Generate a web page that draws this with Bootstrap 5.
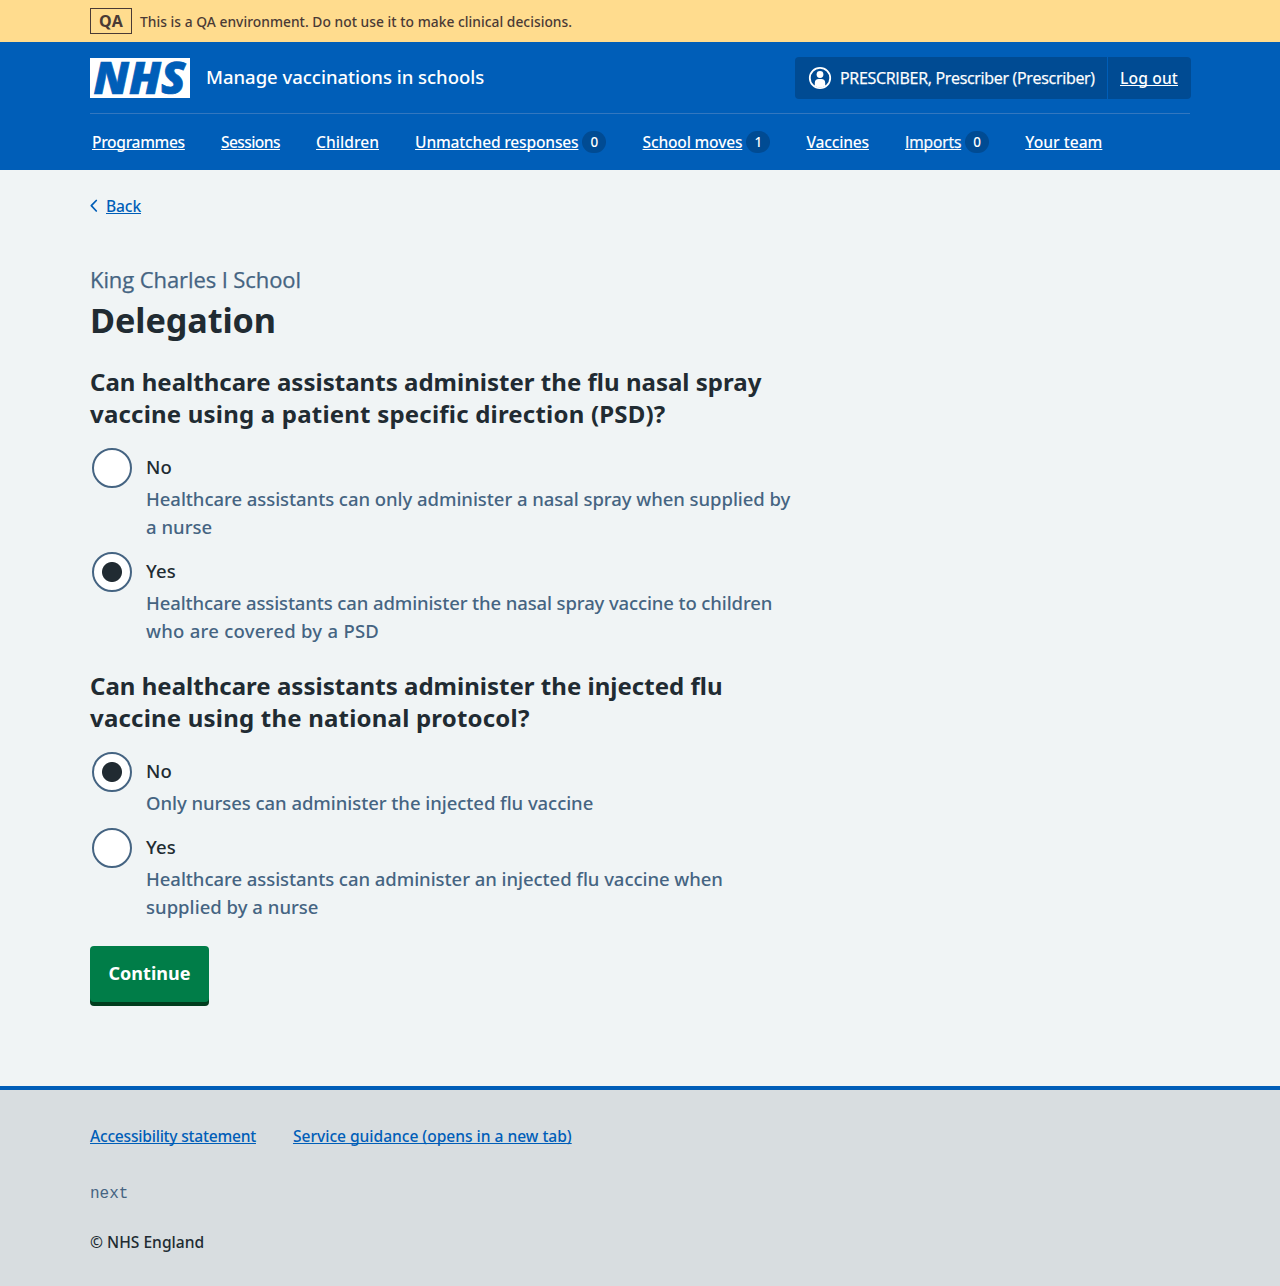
<!DOCTYPE html>
<html lang="en">
<head>
<meta charset="utf-8">
<meta name="viewport" content="width=device-width, initial-scale=1">
<title>Delegation - Manage vaccinations in schools</title>
<link rel="stylesheet" href="https://cdn.jsdelivr.net/npm/bootstrap@5.3.0/dist/css/bootstrap.min.css">
<style>
  :root { --nhs-blue: #005eb8; --nhs-dark: #004b93; --nhs-ink: #212b32; --nhs-hint: #456482; }
  body { background: #f0f4f5; color: var(--nhs-ink); font-family: "Noto Sans", "Open Sans", sans-serif; font-size: 15.6px; font-weight: 500; line-height: 24px; }
  a { color: var(--nhs-blue); text-underline-offset: 1px; text-decoration-thickness: 1px; text-decoration-skip-ink: none; }
  .page-width { width: 1100px; margin: 0 auto; }
  .env-bar { background: #ffdc8e; color: #4a3a35; height: 42px; font-size: 13.8px; letter-spacing: .03px; }
  .env-bar span { padding-top: 2px; }
  .env-tag { border: 1px solid #4a3a35; width: 42px; height: 26px; line-height: 24px; font-size: 16px; font-weight: 700; text-align: center; letter-spacing: .2px; }
  .site-head { background: var(--nhs-blue); height: 128px; color: #fff; }
  .site-head a { color: #fff; }
  .brand-row { height: 72px; border-bottom: 1px solid #3377bf; }
  .nhs-logo { width: 100px; height: 40px; display: block; overflow: visible; }
  .service-name { font-size: 18.5px; line-height: 28px; padding-bottom: 2px; letter-spacing: -.02px; }
  .plain-i { font-family: "Open Sans", "Noto Sans", sans-serif; -webkit-text-stroke: .25px currentColor; }
  .account { background: var(--nhs-dark); border-radius: 4px; height: 42px; margin-right: -1px; }
  .account-user { padding: 0 12px 0 13px; width: 313px; border-right: 1px solid var(--nhs-blue); height: 100%; font-size: 16px; letter-spacing: -.3px; white-space: nowrap; }
  .account-out { padding: 0 13px 0 12px; letter-spacing: .16px; }
  .main-menu { height: 56px; padding: 0 2px; gap: 36.1px; letter-spacing: -.19px; }
  .main-menu li { white-space: nowrap; }
  .fit-snug { letter-spacing: -.34px; }
  .fit-tight { letter-spacing: -.6px; }
  .fit-open { letter-spacing: .02px; }
  .fit-imports { letter-spacing: -.13px; }
  .count { background: var(--nhs-dark); width: 24px; height: 22px; border-radius: 11px; font-size: 13.5px; line-height: 23px; text-align: center; letter-spacing: 0; margin-left: 4px; }
  .back-row { padding-top: 24px; height: 95px; letter-spacing: -.13px; }
  .caption { font-size: 22px; line-height: 28px; color: var(--nhs-hint); letter-spacing: -.09px; font-weight: 400; }
  .page-title { font-size: 34.2px; line-height: 44px; font-weight: 700; letter-spacing: -.08px; margin: 5px 0 24px; }
  .question { font-size: 24px; line-height: 32px; font-weight: 700; letter-spacing: .02px; margin: 0 0 18px; float: none; }
  .question .wide { letter-spacing: .2px; }
  .choice { padding-left: 2px; gap: 14px; margin-bottom: 10px; font-size: 18.5px; line-height: 28px; }
  .choice:last-child { margin-bottom: 24px; }
  .choice .form-check-input { width: 40px; height: 40px; margin: 0 0 -2px; border: 2px solid var(--nhs-hint); background: #fff; box-shadow: none; flex: none; opacity: 1; }
  .choice .form-check-input:checked { background: radial-gradient(circle, var(--nhs-ink) 9.5px, #fff 10.5px); }
  .choice label { display: block; height: 37px; padding-top: 5px; letter-spacing: .1px; }
  .hint { color: var(--nhs-hint); letter-spacing: -.05px; padding-bottom: 1px; white-space: nowrap; }
  .hint .wide { letter-spacing: .26px; }
  .hint .even { letter-spacing: .02px; }
  .hint .close { letter-spacing: -.12px; }
  .go, .go:hover, .go:active { background: #007d48; color: #fff; }
  .go { font-size: 18px; font-weight: 700; line-height: 28px; letter-spacing: 0; width: 119px; height: 56px; padding: 0 0 2px; border: 0; border-radius: 4px; box-shadow: 0 4px 0 #003d1d; display: block; }
  .site-foot { border-top: 4px solid var(--nhs-blue); background: #d8dde0; height: 200px; margin-top: 84px; padding-top: 34px; }
  .foot-links { gap: 37px; }
  .foot-statement { letter-spacing: -.23px; }
  .foot-guidance { letter-spacing: -.03px; }
  .release { font-family: "Liberation Mono", monospace; font-size: 16px; font-weight: 400; color: var(--nhs-hint); margin: 34px 0 24px; }
</style>
<script src="https://cdn.jsdelivr.net/npm/bootstrap@5.3.0/dist/js/bootstrap.bundle.min.js"></script>
</head>
<body>
<div class="env-bar">
  <div class="page-width d-flex align-items-center gap-2 h-100">
    <strong class="env-tag">QA</strong><span>This is a QA environment. Do not use it to make clinical decisions.</span>
  </div>
</div>
<header class="site-head">
  <div class="page-width">
    <div class="brand-row d-flex align-items-center justify-content-between">
      <div class="d-flex align-items-center gap-3">
        <svg class="nhs-logo" viewBox="0 0 100 40" role="img" aria-label="NHS">
          <rect width="100" height="40" fill="#fff"/>
          <text x="3.500" y="36.200" textLength="92" lengthAdjust="spacingAndGlyphs" font-family="Open Sans, Noto Sans, sans-serif" font-size="44.500" font-weight="800" font-style="italic" fill="#005eb8" stroke="#005eb8" stroke-width=".7">NHS</text>
        </svg>
        <span class="service-name">Manage vaccinations in schools</span>
      </div>
      <div class="account d-flex align-items-center">
        <div class="account-user d-flex align-items-center gap-2">
          <svg width="24" height="24" viewBox="0 0 24 24" class="flex-shrink-0" aria-hidden="true">
            <circle cx="12" cy="12" r="10.200" fill="none" stroke="#fff" stroke-width="1.800"/>
            <circle cx="12" cy="8.500" r="3.400" fill="#fff"/>
            <path d="M6.800 20v-3a4 4 0 0 1 4-4h2.400a4 4 0 0 1 4 4v3a10 10 0 0 1-10.400 0z" fill="#fff"/>
          </svg>
          <span class="plain-i">PRESCRIBER, Prescriber (Prescriber)</span>
        </div>
        <div class="account-out"><a href="#">Log out</a></div>
      </div>
    </div>
    <nav aria-label="Main">
      <ul class="main-menu list-unstyled d-flex align-items-center mb-0">
        <li class="fit-snug"><a href="#">Programmes</a></li>
        <li class="fit-tight"><a href="#">Sessions</a></li>
        <li class="fit-open"><a href="#">Children</a></li>
        <li class="d-flex align-items-center"><a href="#">Unmatched responses</a><span class="count">0</span></li>
        <li class="d-flex align-items-center"><a href="#">School moves</a><span class="count">1</span></li>
        <li><a href="#">Vaccines</a></li>
        <li class="d-flex align-items-center fit-imports"><a href="#" class="plain-i">Imports</a><span class="count">0</span></li>
        <li class="fit-open"><a href="#">Your team</a></li>
      </ul>
    </nav>
  </div>
</header>
<main class="page-width">
  <div class="back-row d-flex align-items-start gap-2">
    <svg width="8" height="24" viewBox="0 0 8 24" fill="none" stroke="#005eb8" stroke-width="1.700" stroke-linecap="round" stroke-linejoin="round" aria-hidden="true"><path d="M6.300 6.500L1.300 11.700l5 5.300"/></svg>
    <a href="#">Back</a>
  </div>
  <div class="caption plain-i">King Charles I School</div>
  <h1 class="page-title">Delegation</h1>
  <form>
    <fieldset>
      <legend class="question">Can healthcare assistants administer the flu nasal spray<br><span class="wide">vaccine using a patient specific direction (PSD)?</span></legend>
      <div class="choice d-flex align-items-start">
        <input class="form-check-input" type="radio" name="psd" id="psd-no">
        <div><label for="psd-no">No</label><div class="hint">Healthcare assistants can only administer a nasal spray when supplied by<br><span class="even">a nurse</span></div></div>
      </div>
      <div class="choice d-flex align-items-start">
        <input class="form-check-input" type="radio" name="psd" id="psd-yes" checked>
        <div><label for="psd-yes">Yes</label><div class="hint"><span class="close">Healthcare assistants can administer the nasal spray vaccine to children</span><br><span class="wide">who are covered by a PSD</span></div></div>
      </div>
    </fieldset>
    <fieldset>
      <legend class="question">Can healthcare assistants administer the injected flu<br><span class="wide">vaccine using the national protocol?</span></legend>
      <div class="choice d-flex align-items-start">
        <input class="form-check-input" type="radio" name="protocol" id="np-no" checked>
        <div><label for="np-no">No</label><div class="hint">Only nurses can administer the injected flu vaccine</div></div>
      </div>
      <div class="choice d-flex align-items-start">
        <input class="form-check-input" type="radio" name="protocol" id="np-yes">
        <div><label for="np-yes">Yes</label><div class="hint">Healthcare assistants can administer an injected flu vaccine when<br><span class="even">supplied by a nurse</span></div></div>
      </div>
    </fieldset>
    <button type="button" class="btn go">Continue</button>
  </form>
</main>
<footer class="site-foot">
  <div class="page-width">
    <div class="d-flex foot-links"><a href="#" class="foot-statement">Accessibility statement</a><a href="#" class="foot-guidance">Service guidance (opens in a new tab)</a></div>
    <div class="release">next</div>
    <div>© NHS England</div>
  </div>
</footer>
</body>
</html>
